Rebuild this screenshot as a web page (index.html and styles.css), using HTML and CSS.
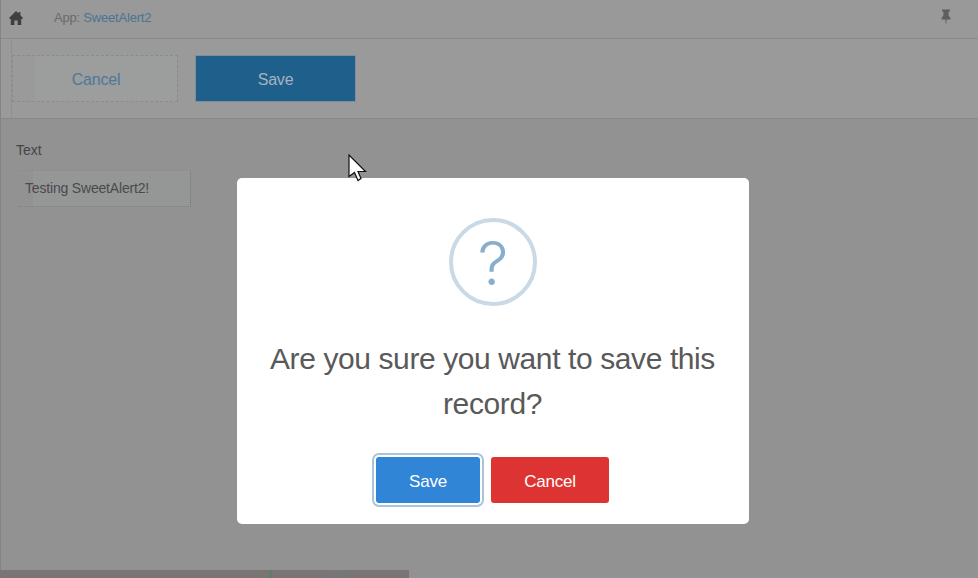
FILE: index.html
```html
<!DOCTYPE html>
<html lang="en">
<head>
<meta charset="utf-8">
<title>SweetAlert2</title>
<link rel="stylesheet" href="styles.css">
</head>
<body>
<div class="page">
  <header class="topbar">
    <svg class="home" viewBox="0 0 14 14" width="14" height="14"><path d="M7 0 L9.6 2.6 V1 H11.4 V4.3 L14 7 L13.2 8 H12.2 V14 H8.6 V9.5 H5.4 V14 H1.8 V8 H0.8 L0 7 Z"/></svg>
    <div class="app">App: <a class="app-link">SweetAlert2</a></div>
    <svg class="pin" viewBox="0 0 10 17" width="10" height="17"><path d="M1 0.5 H9 V2.5 H7.6 L7.6 6.5 L9.4 9 V10.5 H5.7 L5 16.5 L4.3 10.5 H0.6 V9 L2.4 6.5 V2.5 H1 Z"/></svg>
  </header>
  <section class="toolbar">
    <button class="tool-btn tool-cancel">Cancel</button>
    <button class="tool-btn tool-save">Save</button>
  </section>
  <section class="form">
    <div class="label">Text</div>
    <div class="field">Testing SweetAlert2!</div>
  </section>
  <div class="footer-bar"><span class="speck"></span><span class="smudge"></span></div>
</div>

<div class="overlay">
  <div class="modal">
    <div class="icon">?</div>
    <h2 class="title">Are you sure you want to save this record?</h2>
    <div class="actions">
      <button class="btn btn-save">Save</button>
      <button class="btn btn-cancel">Cancel</button>
    </div>
  </div>
</div>

<svg class="cursor" viewBox="0 0 19 28" width="19" height="28"><path d="M1 1 V22.5 L6.5 18.5 L10 26.5 L13 24.5 L10 17.5 H17.5 Z" fill="#fff" stroke="#111" stroke-width="1.2" stroke-linejoin="miter"/></svg>
</body>
</html>
```
FILE: styles.css
```css
* { box-sizing: border-box; }
html, body { margin: 0; height: 100%; }
body {
  width: 978px;
  height: 578px;
  overflow: hidden;
  position: relative;
  font-family: "Liberation Sans", Arial, sans-serif;
  background: #929292;
}
.page {
  height: 578px;
  display: flex;
  flex-direction: column;
  border-left: 1px solid #848484;
}
.topbar {
  height: 39px;
  flex: none;
  display: flex;
  align-items: center;
  background: #999999;
  border-bottom: 1px solid #8a8a8a;
  padding: 0 26px 3px 8px;
}
.home { fill: #3f3f3f; margin-top: 1px; }
.app {
  margin-left: 31px;
  font-size: 13px;
  letter-spacing: -0.2px;
  color: #6a6a6a;
  flex: 1;
}
.app-link { color: #4a7591; }
.pin { fill: #5f5f5f; margin: 0 1px 0 0; }
.toolbar {
  height: 80px;
  flex: none;
  display: flex;
  align-items: flex-start;
  gap: 17px;
  padding: 16px 0 0 11px;
  background: #9a9a9a linear-gradient(#909090, #909090) no-repeat 10px 0 / 1px 100%;
  border-bottom: 1px solid #888888;
}
.tool-btn {
  height: 47px;
  font: 16px "Liberation Sans", Arial, sans-serif;
  letter-spacing: -0.2px;
  padding: 3px 0 0;
}
.tool-cancel {
  width: 166px;
  padding-left: 2px;
  color: #4f7898;
  background: linear-gradient(90deg, #9a9a9a 22px, #9c9d9d 22px);
  border: 1px dashed #8b8b8b;
}
.tool-save {
  width: 161px;
  color: #a4b4c0;
  background: #1f5f8b;
  border: 1px solid #7f8f9a;
}
.form {
  flex: 1;
  padding: 22px 0 0 15px;
  background: #929292;
}
.label {
  font-size: 14px;
  line-height: 18px;
  color: #454545;
}
.field {
  margin: 11px 0 0 2px;
  width: 173px;
  height: 37px;
  padding-left: 7px;
  line-height: 34px;
  font-size: 14px;
  letter-spacing: -0.18px;
  color: #4a4a4a;
  background: linear-gradient(90deg, #929292 15px, #959696 15px);
  border-top: 1px dotted #8a8a8a;
  border-bottom: 1px dotted #7e7e7e;
  border-right: 1px dotted #777777;
}
.footer-bar {
  height: 8px;
  flex: none;
  background: #7a7474;
  display: flex;
  margin-left: -1px;
  width: 409px;
}
.speck { margin-left: 269px; width: 3px; background: #5f7f6e; }
.smudge { margin-left: 55px; width: 18px; background: #777777; }
.overlay {
  position: absolute;
  inset: 0;
  display: flex;
  justify-content: center;
  align-items: flex-start;
  padding: 178px 0 0 8px;
}
.modal {
  width: 512px;
  height: 346px;
  background: #ffffff;
  border-radius: 5px;
  display: flex;
  flex-direction: column;
  align-items: center;
  padding-top: 40px;
}
.icon {
  width: 88px;
  height: 88px;
  flex: none;
  border: 4px solid #c9dae6;
  border-radius: 50%;
  color: #87aecd;
  font-family: Inter, "Liberation Sans", sans-serif;
  font-size: 61px;
  font-weight: 300;
  line-height: 83px;
  text-align: center;
}
.title {
  margin: 30px 1px 0 0;
  width: 470px;
  font-size: 30px;
  font-weight: 400;
  line-height: 45px;
  letter-spacing: -0.4px;
  text-align: center;
  color: #595959;
}
.actions {
  display: flex;
  gap: 11px;
  margin: 31px 2px 0 0;
}
.btn {
  height: 46px;
  border: 0;
  border-radius: 3px;
  padding: 3px 0 0;
  color: #ffffff;
  font: 17px "Liberation Sans", Arial, sans-serif;
  letter-spacing: -0.2px;
}
.btn-save {
  width: 104px;
  padding-left: 1px;
  background: #3085d6;
  box-shadow: 0 0 0 2px #ffffff, 0 0 0 4px #a9c4e0;
}
.btn-cancel {
  width: 118px;
  padding-left: 1px;
  background: #dd3333;
}
.cursor {
  position: absolute;
  left: 348px;
  top: 154px;
}
```
